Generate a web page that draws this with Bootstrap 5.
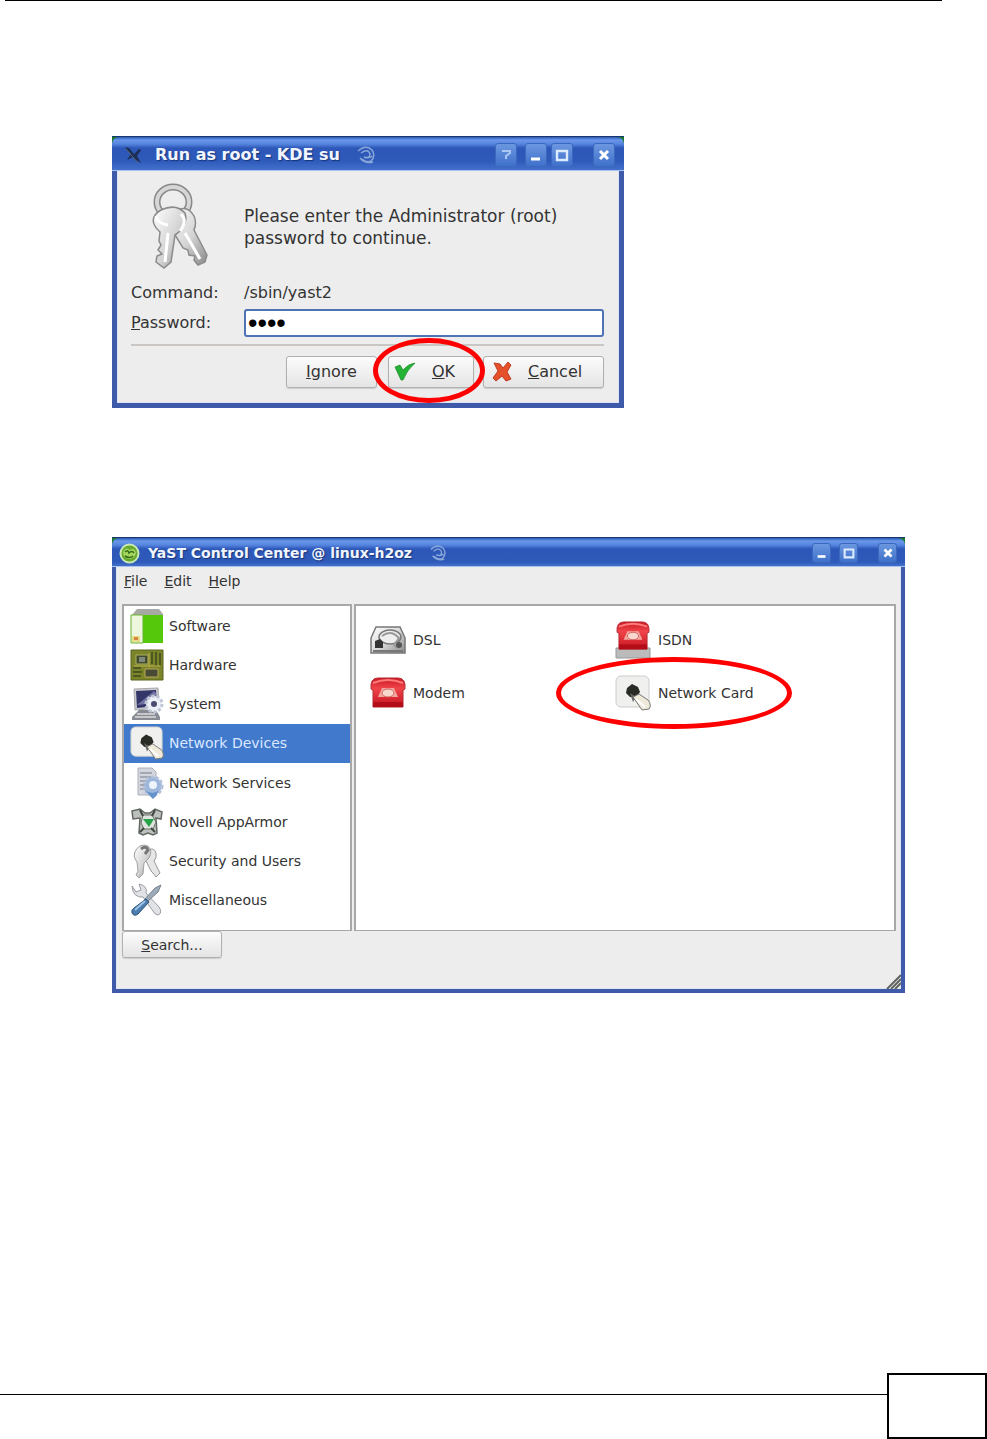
<!DOCTYPE html>
<html lang="en">
<head>
<meta charset="utf-8">
<meta name="viewport" content="width=device-width, initial-scale=1">
<title>YaST network setup</title>
<link rel="stylesheet" href="https://cdn.jsdelivr.net/npm/bootstrap@5.3.0/dist/css/bootstrap.min.css">
<script src="https://cdn.jsdelivr.net/npm/bootstrap@5.3.0/dist/js/bootstrap.bundle.min.js"></script>
<style>
body { background: #fff; color: #333; font-family: "DejaVu Sans", sans-serif; font-size: 14px; line-height: 22px; }
.top-rule { height: 1px; background: #000; margin: 0 45px 0 5px; }
.manual { padding: 135px 82px 0 112px; }
.win { width: 100%; border: 5px solid #3e5aa8; border-top: 0; background: #ededed; box-shadow: inset 0 0 0 1px #dde4f3; }
.win-su { max-width: 512px; margin-bottom: 129px; font-size: 16px; }
.win-yast { max-width: 793px; border-width: 0 4px 4px; }
.title-strip { margin: 0 -5px; background: #187a30; border-top: 1px solid #17366f; }
.title-fill { height: 34px; padding: 2px 9px 0 11px; color: #f1f5ff; font-weight: 700; font-size: 16px; line-height: 22px; border-radius: 7px 7px 0 0; border-bottom: 1px solid #a9c3f1;
  background: linear-gradient(#2c59b4 0, #6a97ea 3px, #5685df 7px, #2d57b8 11px, #2e5aba 24px, #4470cc 100%); text-shadow: 1px 1px 1px #173578; }
.win-yast .title-strip { margin: 0 -4px; }
.win-yast .title-fill { height: 29px; font-size: 14px; padding: 2px 8px 0 7px; }
.win-btn { width: 22px; height: 24px; padding: 0; border: 1px solid #3c69bd; border-radius: 3px; background: linear-gradient(#6c97e0, #3f71cb); display: flex; align-items: center; justify-content: center; }
.win-yast .win-btn { width: 19px; height: 20px; }
.su-body { padding: 12px 15px 15px 14px; }
.su-grid { display: grid; grid-template-columns: 113px 1fr; row-gap: 2px; align-items: center; }
.su-grid label, .su-value { height: 28px; line-height: 28px; }
.su-ask { font-size: 17px; }
.pw { height: 28px; padding: 0 2px; border: 2px solid #4f74b4; border-radius: 3px; color: #000; font-family: "Liberation Sans", sans-serif; font-size: 27px; line-height: 24px; width: 100%; outline: 0; background: #fff; }
.su-line { height: 2px; background: #c9c6c4; margin: 7px 0 10px; }
.kbtn { height: 32px; padding: 0; border: 1px solid #b0b0b0; border-radius: 3px; background: linear-gradient(#fcfcfc, #e4e4e4); color: #333; font-size: 16px; box-shadow: 0 1px 1px #ccc; display: flex; align-items: center; justify-content: center; }
.b-ignore { width: 91px; margin-right: 11px; }
.b-ok, .b-cancel { justify-content: flex-start; padding-left: 5px; gap: 16px; }
.b-ok { width: 86px; }
.b-cancel { width: 121px; margin-left: 9px; padding-left: 8px; }
.b-search { width: 100px; height: 27px; font-size: 14px; }
.ring { position: absolute; pointer-events: none; border: 5px solid #f00; border-radius: 50%; }
.ring-ok { inset: -18px -11px -15px -15px; }
.ring-card { width: 236px; height: 72px; left: -59px; top: -9px; }
.menu-row { height: 37px; padding: 3px 8px 0; gap: 17px; }
.menu-row a { color: #333; text-decoration: none; }
.yast-body { padding: 0 5px 31px 6px; }
.yast-main { display: grid; grid-template-columns: 230px minmax(0, 1fr); gap: 2px; }
.pane { height: 327px; background: #fff; border: 2px solid #a8a8a8; border-bottom-width: 1px; }
.side { padding-bottom: 10px; }
.side a { display: flex; align-items: center; flex: 1 1 0; gap: 5px; padding-left: 6px; color: #333; text-decoration: none; }
.side a.active { background: #4179cc; color: #d9e7ff; }
.mods { display: grid; grid-template-columns: repeat(auto-fill, 245px); grid-auto-rows: 53px; align-content: start; padding: 7px 0 0 14px; }
.mods a { display: flex; align-items: center; gap: 7px; color: #333; text-decoration: none; position: relative; }
.foot { height: 66px; margin-top: auto; }
.foot-line { height: 1px; background: #000; margin-top: 21px; }
.foot-box { width: 100px; border: 2px solid #000; }
svg { flex: none; display: block; }
</style>
</head>
<body class="d-flex flex-column min-vh-100">
<svg width="0" height="0" class="position-absolute" aria-hidden="true">
  <defs>
    <linearGradient id="metal" x2="1" y2="1"><stop stop-color="#fff"/><stop offset=".55" stop-color="#d4d4d4"/><stop offset="1" stop-color="#888"/></linearGradient>
    <linearGradient id="redg" x2="0" y2="1"><stop stop-color="#c91822"/><stop offset=".35" stop-color="#f0444a"/><stop offset="1" stop-color="#c51420"/></linearGradient>
    <symbol id="keys" viewBox="0 0 60 88">
      <ellipse cx="24" cy="19" rx="16" ry="15" fill="none" stroke="#888" stroke-width="7"/>
      <ellipse cx="24" cy="19" rx="16" ry="15" fill="none" stroke="#d6d6d6" stroke-width="4"/>
      <path d="M28 27q11-5 17 6q3 7 0 14l13 25l-2 7l-7 3l-4-5l1-4l-6-1l-1-5l-5-2l-11-18q-10-13 5-20z" fill="url(#metal)" stroke="#8b8b8b" stroke-width="1.5"/>
      <path d="M12 27q15-7 24 3q4 13-10 22l-4 27l-7 6l-8-6l1-6l5-2l-4-4l3-5l-2-4l1-9Q-3 36 12 27z" fill="url(#metal)" stroke="#8b8b8b" stroke-width="1.5"/>
      <path d="M7 33q2 8 12 9m0 8l-3 29M36 50l15 26M32 31q7 7-1 17" fill="none" stroke="#fff" stroke-width="3"/>
    </symbol>
    <symbol id="keys-small" viewBox="0 0 34 36">
      <path d="M16 8q8-5 10 2q1 5-2 8l6 12l-4 4l-3-4l-2-2l-6-12z" fill="#e6e6e6" stroke="#999"/>
      <path d="M6 7q4-7 12-4q5 5 1 12l-5 5l-1 11l-4 4l-3-3l2-4l-1-9q-5-6-1-12z" fill="url(#metal)" stroke="#a2a2a2"/>
      <path d="M11 6q5-4 7 1l-3 4" fill="none" stroke="#777" stroke-width="3"/>
    </symbol>
    <symbol id="jack" viewBox="0 0 36 36">
      <rect x="1" y="1" width="33" height="31" rx="5" fill="#f0f0ee" stroke="#ccc"/>
      <path d="M12 13l5-4l6 3l2 5l-4 6l-6-1l-4-4z" fill="#292b25"/>
      <path d="M15 18l6 4l-3 5z" fill="#666"/>
      <path d="M18 22l6-3l9 6q4 5 1 9l-7 1z" fill="#eee9d9" stroke="#777"/>
      <path d="M21 24l9 8" stroke="#fff" stroke-width="2"/>
    </symbol>
    <symbol id="phone" viewBox="0 0 36 32">
      <path d="M1 12Q0 1 8 1h20q8 0 7 11l-2 1v17H3V13z" fill="url(#redg)" stroke="#b52a30"/>
      <path d="M3 6q15-6 30 0" fill="none" stroke="#ff7b7b" stroke-width="2"/>
      <path d="M12 11h12l4 9H8z" fill="#f4a7a0"/>
      <ellipse cx="18" cy="16" rx="6" ry="4" fill="#f8d7cf" stroke="#cf625e"/>
      <path d="M3 25h30v5H3z" fill="#b20d19"/>
    </symbol>
    <symbol id="swirl" viewBox="0 0 20 20">
      <path d="M2 6Q10-1 16 5q4 6-1 11q-5 2-9-2M5 8q7-5 9 1q0 5-6 3q5 2 8-1M4 13q5 6 13 4" fill="none" stroke="#88a6d8" stroke-width="1.5"/>
    </symbol>
    <symbol id="g-min" viewBox="0 0 16 16"><path d="M3 12h9" stroke="#fff" stroke-width="3"/></symbol>
    <symbol id="g-max" viewBox="0 0 16 16"><path d="M3 4h10v9H3z" fill="none" stroke="#dcebff" stroke-width="2.4"/></symbol>
    <symbol id="g-close" viewBox="0 0 16 16"><path d="M4 4l8 8M12 4l-8 8" stroke="#fff" stroke-width="3"/></symbol>
    <symbol id="g-help" viewBox="0 0 16 16"><path d="M4 4h8v2l-4 3v3" fill="none" stroke="#a9c6f5" stroke-width="2"/></symbol>
  </defs>
</svg>

<div class="top-rule"></div>
<main class="manual">
  <section class="win win-su" aria-label="Run as root">
    <div class="title-strip"><header class="title-fill d-flex align-items-center">
      <svg width="20" height="22" viewBox="0 0 20 22"><path d="M2 3l4 1l5 6l5-5l2 1l-4 6l4 7l-5-3l-3-3l-6 3l4-6z" fill="#1c2e55"/><path d="M3 5l12 14" stroke="#54606f"/></svg>
      <span class="ms-2 ps-1 me-3">Run as root - KDE su</span>
      <svg width="20" height="20"><use href="#swirl"/></svg>
      <div class="d-flex ms-auto">
        <button class="win-btn me-2" aria-label="Help"><svg width="16" height="16"><use href="#g-help"/></svg></button>
        <button class="win-btn me-1" aria-label="Minimize"><svg width="16" height="16"><use href="#g-min"/></svg></button>
        <button class="win-btn me-3" aria-label="Maximize"><svg width="16" height="16"><use href="#g-max"/></svg></button>
        <button class="win-btn ms-1" aria-label="Close"><svg width="16" height="16"><use href="#g-close"/></svg></button>
      </div>
    </header></div>
    <form class="su-body" onsubmit="return false">
      <div class="su-grid">
        <svg class="ms-3" width="64" height="88"><use href="#keys"/></svg>
        <p class="su-ask mb-0">Please enter the Administrator (root)<br>password to continue.</p>
      </div>
      <div class="su-grid mt-2">
        <span class="su-value">Command:</span><span class="su-value">/sbin/yast2</span>
        <label for="pw"><u>P</u>assword:</label>
        <input class="pw" id="pw" type="password" value="root">
      </div>
      <div class="su-line"></div>
      <div class="d-flex justify-content-end">
        <button class="kbtn b-ignore" type="button"><span><u>I</u>gnore</span></button>
        <div class="position-relative">
          <button class="kbtn b-ok" type="submit"><svg width="22" height="20" viewBox="0 0 22 20"><path d="M1 5l5-2l3 5q5-6 12-7q-8 7-12 17H7z" fill="#25b335" stroke="#178525" stroke-width=".7"/></svg><span><u>O</u>K</span></button>
          <span class="ring ring-ok"></span>
        </div>
        <button class="kbtn b-cancel" type="button"><svg width="20" height="22" viewBox="0 0 20 22"><path d="M2 2l6 1l3 4l5-6l3 3l-4 7l4 7l-5 2l-4-5l-6 5l-3-3l5-7z" fill="#e4512b" stroke="#bd3d20"/></svg><span><u>C</u>ancel</span></button>
      </div>
    </form>
  </section>

  <section class="win win-yast" aria-label="YaST Control Center">
    <div class="title-strip"><header class="title-fill d-flex align-items-center">
      <svg width="21" height="21" viewBox="0 0 21 21"><circle cx="10.500" cy="10.500" r="9" fill="#68a930" stroke="#c8e8b0" stroke-width="2"/><path d="M4 9q3-6 7-2q4-3 6 3q-1 5-6 6q-7-1-7-7z" fill="#a5d75f"/><path d="M6 9q3-3 4 1q3-3 5 0M6 13q5 3 8 0" fill="none" stroke="#356c18" stroke-width="1.500"/></svg>
      <span class="ms-2 me-3">YaST Control Center @ linux-h2oz</span>
      <svg width="20" height="18"><use href="#swirl"/></svg>
      <div class="d-flex ms-auto">
        <button class="win-btn me-2" aria-label="Minimize"><svg width="14" height="14"><use href="#g-min"/></svg></button>
        <button class="win-btn me-3" aria-label="Maximize"><svg width="14" height="14"><use href="#g-max"/></svg></button>
        <button class="win-btn ms-1" aria-label="Close"><svg width="14" height="14"><use href="#g-close"/></svg></button>
      </div>
    </header></div>
    <nav class="menu-row d-flex" aria-label="Menu"><a href="#"><u>F</u>ile</a><a href="#"><u>E</u>dit</a><a href="#"><u>H</u>elp</a></nav>
    <div class="yast-body position-relative">
      <div class="yast-main">
        <nav class="pane side d-flex flex-column" aria-label="Categories">
          <a href="#"><svg width="34" height="36" viewBox="0 0 34 36"><path d="M2 7l5-6h22l4 5v29H1z" fill="#a7aaa4"/><path d="M13 7h20v28H13z" fill="#55c80c"/><path d="M1 7h12v28H1z" fill="#eef6dd" stroke="#69b52c"/><path d="M2 28h8v6H2z" fill="#e7dc87"/><path d="M4 29h4v3H4z" fill="#d6863b"/></svg>Software</a>
          <a href="#"><svg width="34" height="32" viewBox="0 0 34 32"><path d="M1 1h32v30H1z" fill="#7c842a" stroke="#59601f"/><path d="M6 6h12v9H6z" fill="#424a2c" stroke="#aab062"/><path d="M9 8h6v5H9z" fill="#80887e"/><path d="M15 20h13v8H15z" fill="#484a35" stroke="#b5a857"/><path d="M22 3v12M26 3v14M30 4v12M3 19h8M3 23h9M3 27h8" stroke="#3d491c" stroke-width="1.500"/><path d="M19 4v14M4 17h26" stroke="#bbb050"/></svg>Hardware</a>
          <a href="#"><svg width="34" height="34" viewBox="0 0 34 34"><path d="M4 2l24-1l1 20L5 23z" fill="#c8c9cf" stroke="#aaa"/><path d="M6 4l20-1l1 16l-20 2z" fill="#343568"/><path d="M7 18L24 4l2 2v10z" fill="#7274a5"/><path d="M9 23h17l4 7v3H2v-3z" fill="#888b94"/><path d="M7 27h18M5 30h21" stroke="#ddd" stroke-width="1.500"/><circle cx="24" cy="17" r="8" fill="#edf0f7" stroke="#c1c6d4" stroke-width="3" stroke-dasharray="3 2"/><circle cx="24" cy="17" r="3" fill="#4a4b70"/></svg>System</a>
          <a href="#" class="active" aria-current="true"><svg width="34" height="34"><use href="#jack"/></svg>Network Devices</a>
          <a href="#"><svg width="34" height="34" viewBox="0 0 34 34"><path d="M8 2h14l4 4v23H8z" fill="#d4d6df" stroke="#adb0ba"/><path d="M10 7h12M10 11h12M10 15h11M10 19h6M10 23h6" stroke="#9499a4" stroke-width="1.500"/><circle cx="23" cy="20" r="9" fill="#9bb7db" stroke="#b3c2da" stroke-width="3" stroke-dasharray="3 2"/><circle cx="23" cy="19" r="4" fill="#eef4fc"/><path d="M15 24q8 6 14 0l-3 6l-3 3l-3-3z" fill="#6492cc"/></svg>Network Services</a>
          <a href="#"><svg width="34" height="30" viewBox="0 0 34 30"><path d="M2 4l8-2l5 4h5l5-4l7 3l-1 7l-5-1l1 15l-4 2l-5-2l-5 2l-4-2l1-15l-7 1z" fill="#bdc0bd" stroke="#626862" stroke-width="1.500"/><path d="M13 8h9l4 7l-3 7h-9l-3-6z" fill="#e0e4e0" stroke="#687568"/><path d="M13 12h11l-5 8z" fill="#29a34a"/><path d="M10 3l3 6M25 3l-3 6M10 25l4-4M25 25l-4-4" stroke="#3f4740" stroke-width="2"/></svg>Novell AppArmor</a>
          <a href="#"><svg width="34" height="36"><use href="#keys-small"/></svg>Security and Users</a>
          <a href="#"><svg width="34" height="34" viewBox="0 0 34 34"><path d="M2 3l4 6l5-2l-2-6q9 2 7 9l13 14q4 6-1 8q-3 0-5-4L13 14q-10 1-11-11z" fill="#e0e2e5" stroke="#9a9da2"/><path d="M31 2l-3 7l-11 10l-3-2L25 5z" fill="#9daab7" stroke="#75828f"/><path d="M16 16l3 3L8 31q-4 3-6-1q-1-3 2-5z" fill="#4d7cae" stroke="#2c557e"/><path d="M5 27l10-9" stroke="#9cc3e7" stroke-width="2"/></svg>Miscellaneous</a>
        </nav>
        <div class="pane mods">
          <a href="#"><svg width="36" height="30" viewBox="0 0 36 30"><path d="M1 13L6 2h24l5 11v15H1z" fill="url(#metal)" stroke="#777" stroke-width="1.500"/><ellipse cx="20" cy="12" rx="11" ry="7" fill="#eee" stroke="#777" stroke-width="1.500"/><path d="M12 11q9-7 17 2l-5 7q3 4 7 1" fill="none" stroke="#999" stroke-width="2"/><path d="M5 16l5-2l3 3v6H5z" fill="#333"/><circle cx="29" cy="20" r="3" fill="#555"/><path d="M3 26h30" stroke="#777" stroke-width="2"/></svg>DSL</a>
          <a href="#"><svg width="36" height="39" viewBox="0 0 36 39"><path d="M1 28h34v10H1z" fill="#bbb" stroke="#999"/><use href="#phone" width="36" height="30" y="1"/></svg>ISDN</a>
          <a href="#"><svg width="36" height="32"><use href="#phone"/></svg>Modem</a>
          <a href="#"><svg width="36" height="36"><use href="#jack"/></svg>Network Card<span class="ring ring-card"></span></a>
        </div>
      </div>
      <button class="kbtn b-search" type="button"><span><u>S</u>earch...</span></button>
      <svg class="position-absolute bottom-0 end-0" width="16" height="16" viewBox="0 0 16 16"><path d="M2 16L16 2M6 16L16 6M10 16l6-6" stroke="#5f655f" stroke-width="2"/></svg>
    </div>
  </section>
</main>
<footer class="foot d-flex">
  <div class="foot-line flex-grow-1"></div>
  <div class="foot-box"></div>
</footer>
</body>
</html>
